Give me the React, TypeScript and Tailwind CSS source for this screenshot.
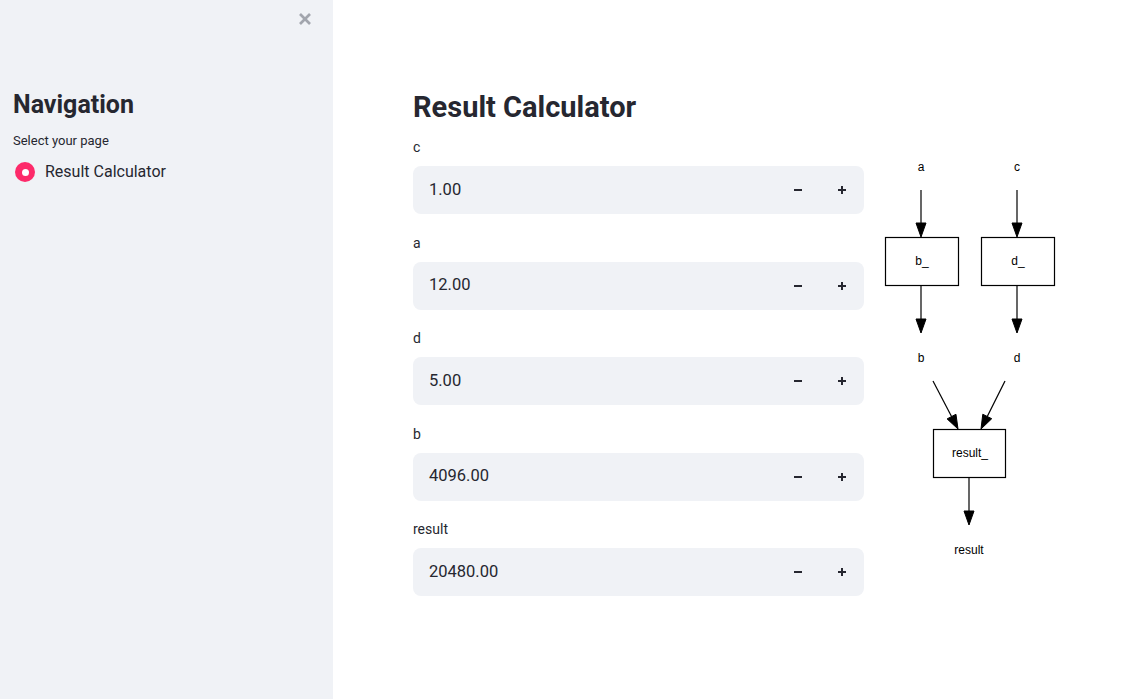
import React from "react";

const fields = [
  { label: "c", value: "1.00" },
  { label: "a", value: "12.00" },
  { label: "d", value: "5.00" },
  { label: "b", value: "4096.00" },
  { label: "result", value: "20480.00" },
];

function NumberInput({ label, value }: { label: string; value: string }) {
  return (
    <div>
      <div className="h-[21px] mb-2 text-[14px] leading-[21px]">{label}</div>
      <div className="flex h-12 items-center rounded-lg bg-[#f0f2f6]">
        <div className="flex-1 pl-4 text-[16.5px]">{value}</div>
        {/* minus */}
        <button className="flex h-12 w-[45px] items-center justify-center">
          <svg width="10" height="10" viewBox="0 0 10 10">
            <line x1="1" y1="5" x2="9" y2="5" stroke="#262730" strokeWidth="2" />
          </svg>
        </button>
        {/* plus */}
        <button className="flex h-12 w-[44px] items-center justify-center">
          <svg width="10" height="10" viewBox="0 0 10 10">
            <line x1="1" y1="5" x2="9" y2="5" stroke="#262730" strokeWidth="2" />
            <line x1="5" y1="1" x2="5" y2="9" stroke="#262730" strokeWidth="2" />
          </svg>
        </button>
      </div>
    </div>
  );
}

function Arrow({ x1, y1, x2, y2 }: { x1: number; y1: number; x2: number; y2: number }) {
  // line ending in a filled head whose tip sits at (x2, y2)
  const dx = x2 - x1;
  const dy = y2 - y1;
  const len = Math.sqrt(dx * dx + dy * dy);
  const ux = dx / len;
  const uy = dy / len;
  const hl = 14;
  const hw = 5;
  const bx = x2 - ux * hl;
  const by = y2 - uy * hl;
  const pts = `${x2},${y2} ${bx - uy * hw},${by + ux * hw} ${bx + uy * hw},${by - ux * hw}`;
  return (
    <g>
      <line x1={x1} y1={y1} x2={bx} y2={by} stroke="black" strokeWidth="1.2" />
      <polygon points={pts} fill="black" stroke="black" strokeWidth="1" />
    </g>
  );
}

function Graph() {
  const t = { fontFamily: "'Liberation Sans', Arial, sans-serif", fontSize: 12, textAnchor: "middle" as const };
  return (
    <svg width="200" height="430" viewBox="0 0 200 430">
      <text x="51" y="34" {...t}>a</text>
      <text x="147" y="34" {...t}>c</text>
      <Arrow x1={51} y1={53} x2={51} y2={100} />
      <Arrow x1={147} y1={53} x2={147} y2={100} />
      <rect x="15.5" y="100.5" width="73" height="48" fill="white" stroke="black" strokeWidth="1.2" />
      <rect x="111.5" y="100.5" width="73" height="48" fill="white" stroke="black" strokeWidth="1.2" />
      <text x="52" y="128" {...t}>b_</text>
      <text x="148" y="128" {...t}>d_</text>
      <Arrow x1={51} y1={149} x2={51} y2={196} />
      <Arrow x1={147} y1={149} x2={147} y2={196} />
      <text x="51" y="225" {...t}>b</text>
      <text x="147" y="225" {...t}>d</text>
      <Arrow x1={63} y1={244} x2={88} y2={292} />
      <Arrow x1={135} y1={244} x2={111} y2={292} />
      <rect x="63.5" y="292.5" width="72" height="48" fill="white" stroke="black" strokeWidth="1.2" />
      <text x="100" y="320" {...t}>result_</text>
      <Arrow x1={99} y1={341} x2={99} y2={388} />
      <text x="99" y="417" {...t}>result</text>
    </svg>
  );
}

export default function App() {
  return (
    <div
      className="flex h-[699px] w-full bg-white text-[#262730]"
      style={{ fontFamily: "Roboto, 'Noto Sans', sans-serif" }}
    >
      {/* Sidebar */}
      <aside className="relative w-[333px] shrink-0 bg-[#f0f2f6] px-[13px] pt-[87px]">
        <button className="absolute right-[21px] top-[12px]">
          <svg width="14" height="14" viewBox="0 0 14 14">
            <line x1="2" y1="2" x2="12" y2="12" stroke="#a2a5ad" strokeWidth="2.6" />
            <line x1="12" y1="2" x2="2" y2="12" stroke="#a2a5ad" strokeWidth="2.6" />
          </svg>
        </button>
        <h2 className="text-[25px] font-bold leading-[36px]">Navigation</h2>
        <div className="mt-[9px] text-[13px] leading-[18px]">Select your page</div>
        <label className="ml-[2px] mt-[10px] flex items-center gap-[10px]">
          <span className="flex h-5 w-5 items-center justify-center rounded-full bg-[#fd2a6a]">
            <span className="h-[7px] w-[7px] rounded-full bg-white" />
          </span>
          <span className="text-[16px] leading-6">Result Calculator</span>
        </label>
      </aside>

      {/* Main */}
      <main className="flex-1 pl-20 pt-[90px]">
        <h1 className="text-[29px] font-bold leading-[34px]">Result Calculator</h1>
        <div className="mt-[13px] flex">
          <div className="flex w-[451px] flex-col gap-[18.5px]">
            {fields.map((f) => (
              <NumberInput key={f.label} label={f.label} value={f.value} />
            ))}
          </div>
          <div className="ml-[6px]">
            <Graph />
          </div>
        </div>
      </main>
    </div>
  );
}
